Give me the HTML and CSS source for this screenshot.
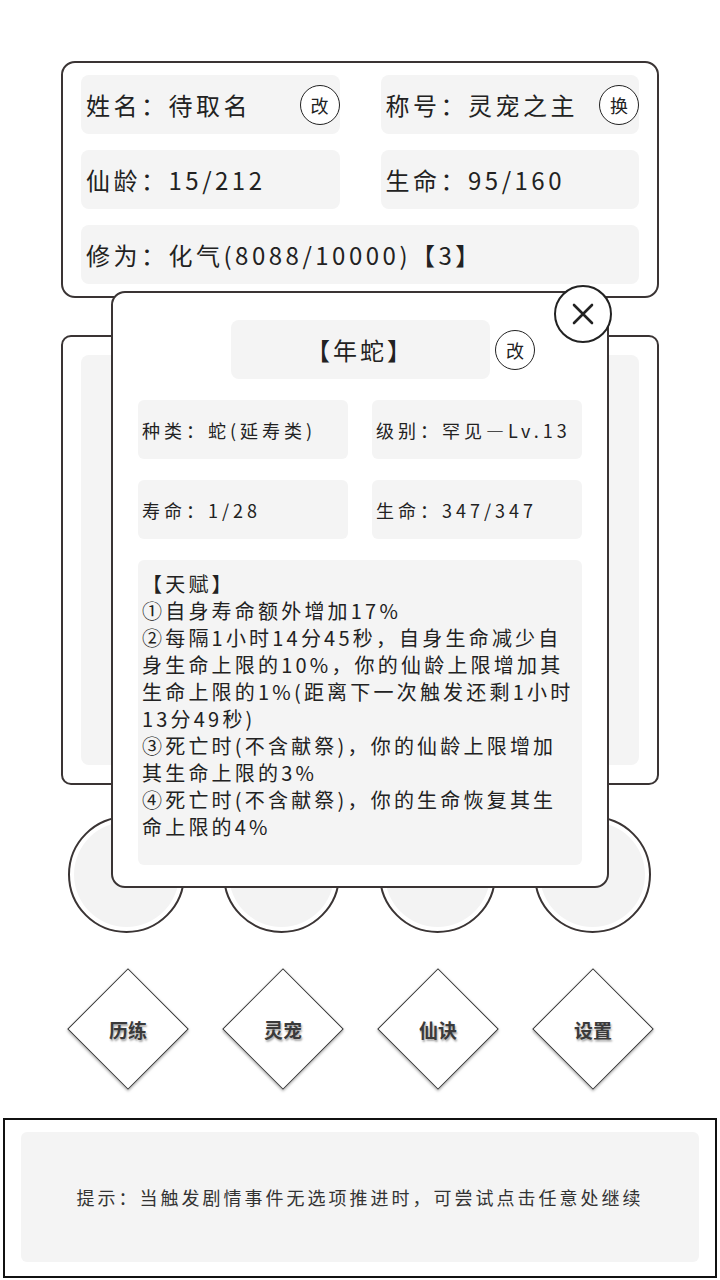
FILE: index.html
```html
<!DOCTYPE html>
<html lang="zh-CN">
<head>
    <meta charset="UTF-8">
    <meta name="viewport" content="width=device-width, initial-scale=1.0">
    <title>修仙 - 灵宠</title>
    <link rel="stylesheet" href="styles.css">
</head>
<body>
    <div class="page">
        <!-- player info -->
        <div class="card info">
            <div class="cell"><span>姓名：待取名</span><button class="round-btn">改</button></div>
            <div class="cell"><span>称号：灵宠之主</span><button class="round-btn">换</button></div>
            <div class="cell"><span>仙龄：15/212</span></div>
            <div class="cell"><span>生命：95/160</span></div>
            <div class="cell wide"><span>修为：化气(8088/10000)【3】</span></div>
        </div>

        <!-- main panel (pet list) -->
        <div class="card panel">
            <div class="panel-body"></div>
        </div>

        <div class="slots">
            <div class="slot"></div>
            <div class="slot"></div>
            <div class="slot"></div>
            <div class="slot"></div>
        </div>

        <div class="nav">
            <div class="diamond"><span>历练</span></div>
            <div class="diamond"><span>灵宠</span></div>
            <div class="diamond"><span>仙诀</span></div>
            <div class="diamond"><span>设置</span></div>
        </div>

        <div class="tips">
            <div class="tips-body">提示：当触发剧情事件无选项推进时，可尝试点击任意处继续</div>
        </div>

        <!-- pet detail popup -->
        <div class="modal">
            <button class="close-btn">
                <svg width="22" height="22" viewBox="0 0 22 22">
                    <path d="M2 2 L20 20 M20 2 L2 20" stroke="#222" stroke-width="2.6" stroke-linecap="round" fill="none"/>
                </svg>
            </button>
            <div class="pet-title">
                <div class="pet-name">【年蛇】</div>
                <button class="round-btn">改</button>
            </div>
            <div class="pet-stats">
                <div class="stat">种类：蛇(延寿类)</div>
                <div class="stat">级别：罕见—Lv.13</div>
                <div class="stat">寿命：1/28</div>
                <div class="stat">生命：347/347</div>
            </div>
            <div class="talent">
                <div class="talent-head">【天赋】</div>
                <div>①自身寿命额外增加17%</div>
                <div>②每隔1小时14分45秒，自身生命减少自身生命上限的10%，你的仙龄上限增加其生命上限的1%(距离下一次触发还剩1小时13分49秒)</div>
                <div>③死亡时(不含献祭)，你的仙龄上限增加其生命上限的3%</div>
                <div>④死亡时(不含献祭)，你的生命恢复其生命上限的4%</div>
            </div>
        </div>
    </div>
</body>
</html>
```

FILE: styles.css
```css
* {
    box-sizing: border-box;
}

body {
    margin: 0;
    padding: 0;
    background: #fff;
    color: #222;
    font-family: "Noto Sans CJK SC", "Noto Sans", sans-serif;
}

.page {
    position: relative;
    width: 720px;
    height: 1280px;
    overflow: hidden;
    padding-top: 61px;
}

.card {
    margin: 0 61px;
    border: 2px solid #3a3434;
    border-radius: 14px;
    background: #fff;
}

.info {
    display: grid;
    grid-template-columns: 1fr 1fr;
    gap: 16px 41px;
    padding: 12px 18px;
}

.cell {
    height: 59px;
    background: #f4f4f4;
    border-radius: 8px;
    display: flex;
    align-items: center;
    justify-content: space-between;
    padding-left: 5px;
    font-size: 24px;
    letter-spacing: 3.5px;
}

.cell.wide {
    grid-column: 1 / 3;
}

.round-btn {
    width: 40px;
    height: 40px;
    border-radius: 50%;
    border: 1.5px solid #222;
    background: #fff;
    color: #222;
    font-family: inherit;
    font-size: 18px;
    padding: 0;
    flex-shrink: 0;
}

.panel {
    margin-top: 37px;
    height: 450px;
    border-radius: 10px;
    padding: 18px;
}

.panel-body {
    height: 100%;
    background: #f4f4f4;
    border-radius: 8px;
}

.slots {
    display: flex;
    justify-content: space-between;
    margin: 31px 69px 0 68px;
}

.slot {
    width: 117px;
    height: 117px;
    border-radius: 50%;
    border: 2px solid #3a3434;
    background: #f3f3f3;
    box-shadow: inset 0 0 0 4px #fff;
}

.nav {
    display: flex;
    justify-content: space-between;
    margin: 36px 67px 0 68px;
}

.diamond {
    width: 120px;
    height: 120px;
    display: grid;
    place-items: center;
}

.diamond::before {
    content: "";
    grid-area: 1 / 1;
    width: 84px;
    height: 84px;
    background: #fff;
    border: 1.5px solid #333;
    transform: rotate(45deg);
    box-shadow: 1px 1px 3px rgba(0, 0, 0, 0.35);
}

.diamond span {
    grid-area: 1 / 1;
    position: relative;
    z-index: 1;
    font-size: 19px;
    font-weight: bold;
    color: #3a3a3a;
    text-shadow: 1px 2px 2px rgba(0, 0, 0, 0.35);
}

.tips {
    margin: 29px 3px 0;
    height: 160px;
    border: 2px solid #111;
    padding: 12px 16px 14px;
}

.tips-body {
    height: 100%;
    background: #f4f4f4;
    border-radius: 6px;
    display: flex;
    align-items: center;
    justify-content: center;
    font-size: 18px;
    letter-spacing: 3px;
    color: #333;
}

.modal {
    position: absolute;
    left: 111px;
    top: 291px;
    width: 498px;
    height: 597px;
    background: #fff;
    border: 2px solid #3a3434;
    border-radius: 14px;
    padding: 27px 25px 0;
}

.close-btn {
    position: absolute;
    right: -5px;
    top: -8px;
    width: 58px;
    height: 58px;
    border-radius: 50%;
    border: 2px solid #222;
    background: #fff;
    padding: 0;
    display: flex;
    align-items: center;
    justify-content: center;
}

.pet-title {
    display: flex;
    justify-content: center;
    align-items: center;
    position: relative;
}

.pet-name {
    width: 259px;
    height: 59px;
    background: #f4f4f4;
    border-radius: 8px;
    display: flex;
    align-items: center;
    justify-content: center;
    font-size: 24px;
    letter-spacing: 3px;
}

.pet-title .round-btn {
    position: absolute;
    left: 357px;
}

.pet-stats {
    display: grid;
    grid-template-columns: 1fr 1fr;
    gap: 21px 24px;
    margin-top: 21px;
}

.stat {
    height: 59px;
    background: #f4f4f4;
    border-radius: 6px;
    display: flex;
    align-items: center;
    padding-left: 4px;
    font-size: 18px;
    letter-spacing: 4px;
}

.talent {
    margin-top: 21px;
    height: 305px;
    background: #f4f4f4;
    border-radius: 6px;
    padding: 10px 7px 10px 4px;
    font-size: 20px;
    line-height: 27px;
    letter-spacing: 3.2px;
}
```
